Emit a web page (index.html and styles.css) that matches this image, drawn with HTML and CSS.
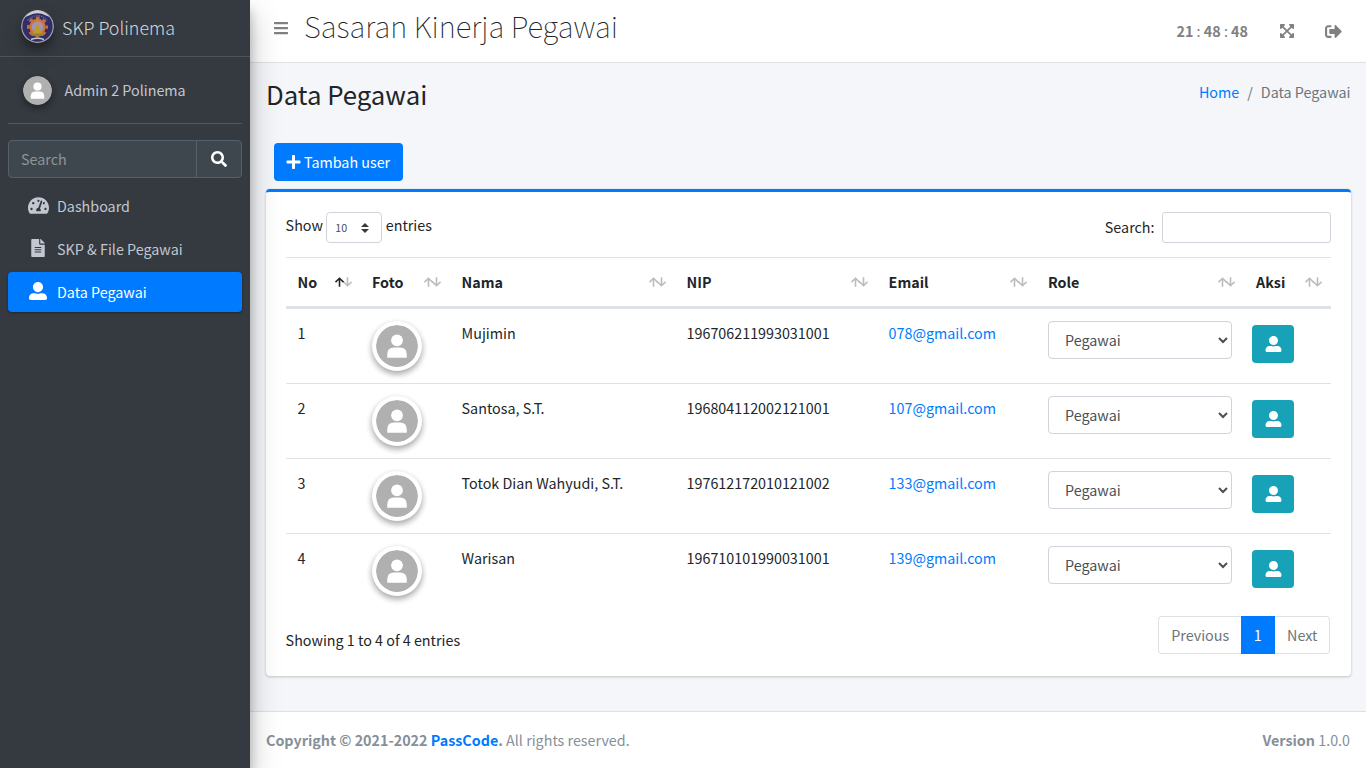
FILE: index.html
```html
<!DOCTYPE html>
<html lang="id">
<head>
<meta charset="utf-8">
<title>Sasaran Kinerja Pegawai</title>
<link rel="stylesheet" href="styles.css">
</head>
<body>
<svg class="defs" width="0" height="0">
  <symbol id="bars" viewBox="0 0 448 512"><path d="M16 132h416c8.800 0 16-7.200 16-16V76c0-8.800-7.200-16-16-16H16C7.200 60 0 67.200 0 76v40c0 8.800 7.200 16 16 16zm0 160h416c8.800 0 16-7.200 16-16v-40c0-8.800-7.200-16-16-16H16c-8.800 0-16 7.200-16 16v40c0 8.800 7.200 16 16 16zm0 160h416c8.800 0 16-7.200 16-16v-40c0-8.800-7.200-16-16-16H16c-8.800 0-16 7.200-16 16v40c0 8.800 7.200 16 16 16z"/></symbol>
  <symbol id="search" viewBox="0 0 512 512"><path d="M505 442.700L405.300 343c-4.500-4.500-10.600-7-17-7H372c27.600-35.300 44-79.700 44-128C416 93.100 322.900 0 208 0S0 93.100 0 208s93.100 208 208 208c48.300 0 92.700-16.400 128-44v16.300c0 6.400 2.500 12.500 7 17l99.700 99.700c9.400 9.400 24.600 9.400 33.900 0l28.300-28.300c9.400-9.400 9.400-24.600.1-34zM208 336c-70.700 0-128-57.200-128-128 0-70.700 57.200-128 128-128 70.700 0 128 57.200 128 128 0 70.700-57.200 128-128 128z"/></symbol>
  <symbol id="gauge" viewBox="0 0 576 512"><path d="M288 32C128.940 32 0 160.940 0 320c0 52.800 14.250 102.260 39.060 144.800 5.610 9.620 16.300 15.200 27.440 15.200h443c11.140 0 21.830-5.580 27.440-15.200C561.750 422.260 576 372.800 576 320c0-159.060-128.940-288-288-288zm0 64c14.710 0 26.580 10.130 30.320 23.650-1.110 2.260-2.640 4.230-3.450 6.670l-9.220 27.670c-5.130 3.490-10.970 6.010-17.640 6.010-17.670 0-32-14.330-32-32S270.330 96 288 96zM96 384c-17.670 0-32-14.330-32-32s14.330-32 32-32 32 14.330 32 32-14.330 32-32 32zm48-160c-17.670 0-32-14.330-32-32s14.330-32 32-32 32 14.330 32 32-14.330 32-32 32zm246.770-72.410l-61.330 184C343.130 347.330 352 364.540 352 384c0 11.720-3.380 22.550-8.880 32H232.880c-5.500-9.450-8.880-20.280-8.880-32 0-33.940 26.500-61.430 59.900-63.590l61.340-184.010c4.170-12.560 17.730-19.450 30.360-15.170 12.570 4.190 19.350 17.790 15.170 30.360zm14.660 57.200l15.520-46.550c3.470-1.290 7.130-2.230 11.050-2.230 17.670 0 32 14.330 32 32s-14.330 32-32 32c-11.380-.01-20.890-6.280-26.570-15.220zM480 384c-17.670 0-32-14.330-32-32s14.330-32 32-32 32 14.330 32 32-14.330 32-32 32z"/></symbol>
  <symbol id="file" viewBox="0 0 384 512"><path d="M224 136V0H24C10.700 0 0 10.700 0 24v464c0 13.300 10.700 24 24 24h336c13.300 0 24-10.700 24-24V160H248c-13.200 0-24-10.800-24-24zm64 236c0 6.600-5.400 12-12 12H108c-6.600 0-12-5.400-12-12v-8c0-6.600 5.400-12 12-12h168c6.600 0 12 5.400 12 12v8zm0-64c0 6.600-5.400 12-12 12H108c-6.600 0-12-5.400-12-12v-8c0-6.600 5.400-12 12-12h168c6.600 0 12 5.400 12 12v8zm0-72v8c0 6.600-5.400 12-12 12H108c-6.600 0-12-5.400-12-12v-8c0-6.600 5.400-12 12-12h168c6.600 0 12 5.400 12 12zm96-114.100v6.100H256V0h6.100c6.400 0 12.500 2.500 17 7l97.900 98c4.500 4.500 7 10.600 7 16.900z"/></symbol>
  <symbol id="user" viewBox="0 0 512 512"><path d="M256 288c79.500 0 144-64.500 144-144S335.500 0 256 0 112 64.500 112 144s64.500 144 144 144zm128 32h-55.100c-22.200 10.200-46.900 16-72.900 16s-50.600-5.800-72.900-16H128C57.300 320 0 377.300 0 448v16c0 26.500 21.500 48 48 48h416c26.500 0 48-21.500 48-48v-16c0-70.700-57.300-128-128-128z"/></symbol>
  <symbol id="plus" viewBox="0 0 448 512"><path d="M416 208H272V64c0-17.670-14.330-32-32-32h-32c-17.670 0-32 14.330-32 32v144H32c-17.670 0-32 14.330-32 32v32c0 17.670 14.330 32 32 32h144v144c0 17.670 14.330 32 32 32h32c17.670 0 32-14.330 32-32V304h144c17.670 0 32-14.330 32-32v-32c0-17.670-14.330-32-32-32z"/></symbol>
  <symbol id="expand" viewBox="0 0 448 512"><path d="M448 344v112a23.940 23.940 0 0 1-24 24H312c-21.390 0-32.090-25.900-17-41l36.200-36.200L224 295.600 116.770 402.900 153 439c15.090 15.100 4.390 41-17 41H24a23.940 23.940 0 0 1-24-24V344c0-21.400 25.890-32.100 41-17l36.190 36.200L184.460 256 77.180 148.700 41 185c-15.100 15.100-41 4.400-41-17V56a23.940 23.940 0 0 1 24-24h112c21.390 0 32.090 25.900 17 41l-36.200 36.200L224 216.400l107.230-107.300L295 73c-15.090-15.100-4.390-41 17-41h112a23.940 23.940 0 0 1 24 24v112c0 21.400-25.890 32.100-41 17l-36.190-36.200L263.540 256l107.280 107.300L407 327.100c15.100-15.200 41-4.500 41 16.900z"/></symbol>
  <symbol id="signout" viewBox="0 0 512 512"><path d="M497 273L329 441c-15 15-41 4.500-41-17v-96H152c-13.300 0-24-10.700-24-24v-96c0-13.300 10.700-24 24-24h136V88c0-21.400 25.900-32 41-17l168 168c9.300 9.400 9.300 24.600 0 34zM192 436v-40c0-6.600-5.400-12-12-12H96c-17.700 0-32-14.300-32-32V160c0-17.700 14.300-32 32-32h84c6.600 0 12-5.400 12-12V76c0-6.600-5.400-12-12-12H96c-53 0-96 43-96 96v192c0 53 43 96 96 96h84c6.600 0 12-5.400 12-12z"/></symbol>
  <symbol id="avatar" viewBox="0 0 42 42"><circle cx="21" cy="21" r="21" fill="#b0b0b0"/><circle cx="21" cy="15.300" r="5.900" fill="#fff"/><path d="M11.200 32.800v-3.300q0-7 7-7h5.600q7 0 7 7v3.300z" fill="#fff"/></symbol>
  <symbol id="up" viewBox="0 0 9 10"><path d="M4.500 9.700V1.400M.5 5.200l4-3.900 4 3.900"/></symbol>
  <symbol id="down" viewBox="0 0 9 10"><path d="M4.500.2v8.300M.5 4.800l4 3.900 4-3.900"/></symbol>
</svg>

<aside class="sidebar">
  <a class="brand">
    <svg class="logo" viewBox="0 0 33 33">
      <circle cx="16.500" cy="16.500" r="15.800" fill="#302d68" stroke="#a3a3aa" stroke-width="1.300"/>
      <path d="M4 7Q16.500-6.500 29 7L25 5.500Q16.500 1 8 5.500z" fill="#cfcfcf"/>
      <path d="M6.500 10.500Q16.500.5 26.500 10.500" fill="none" stroke="#6b6a92" stroke-width="1.300" stroke-dasharray="1.500 1"/>
      <circle cx="16.500" cy="17" r="9.200" fill="none" stroke="#c4703a" stroke-width="2.600" stroke-dasharray="3.800 3.425" stroke-dashoffset="1.900"/>
      <circle cx="16.500" cy="17" r="7" fill="#a294b4" stroke="#cf7233" stroke-width="2.400"/>
      <path d="M16.500 8.500l1.600 9.500 3.400 6h-10l3.400-6z" fill="#b99d2e"/>
      <path d="M11 23.500h11v2.500H11z" fill="#94803a"/>
      <path d="M10 29.500q6.500-2.500 13 0" fill="none" stroke="#c4c4c8" stroke-width="1.600"/>
    </svg>
    <span>SKP Polinema</span>
  </a>
  <div class="side-body">
    <div class="user-panel">
      <svg class="user-pic"><use href="#avatar"/></svg>
      <span>Admin 2 Polinema</span>
    </div>
    <div class="side-search">
      <input type="text" placeholder="Search">
      <button><svg><use href="#search"/></svg></button>
    </div>
    <nav class="menu">
      <a><svg class="i-gauge"><use href="#gauge"/></svg><span>Dashboard</span></a>
      <a><svg class="i-file"><use href="#file"/></svg><span>SKP &amp; File Pegawai</span></a>
      <a class="active"><svg class="i-user"><use href="#user"/></svg><span>Data Pegawai</span></a>
    </nav>
  </div>
</aside>

<div class="page">
  <header class="topbar">
    <svg class="i-bars"><use href="#bars"/></svg>
    <h1>Sasaran Kinerja Pegawai</h1>
    <div class="clock"><b>21</b> : <b>48</b> : <b>48</b></div>
    <svg class="i-expand"><use href="#expand"/></svg>
    <svg class="i-out"><use href="#signout"/></svg>
  </header>

  <main class="content">
    <div class="title-row">
      <h2>Data Pegawai</h2>
      <div class="crumbs"><a>Home</a><span class="slash">/</span><span>Data Pegawai</span></div>
    </div>
    <button class="btn-add"><svg><use href="#plus"/></svg><span>Tambah user</span></button>

    <section class="card">
      <div class="tools">
        <div class="length"><span>Show</span>
          <div class="len-select"><span>10</span><svg viewBox="0 0 8 10"><path d="M4 0L0 4h8zM4 10L0 6h8z"/></svg></div>
          <span>entries</span></div>
        <div class="filter"><span>Search:</span><input type="text"></div>
      </div>
      <table>
        <colgroup><col class="c1"><col class="c2"><col class="c3"><col class="c4"><col class="c5"><col class="c6"><col class="c7"></colgroup>
        <thead><tr>
          <th><div>No<span class="sort asc"><svg><use href="#up"/></svg><svg><use href="#down"/></svg></span></div></th>
          <th><div>Foto<span class="sort"><svg><use href="#up"/></svg><svg><use href="#down"/></svg></span></div></th>
          <th><div>Nama<span class="sort"><svg><use href="#up"/></svg><svg><use href="#down"/></svg></span></div></th>
          <th><div>NIP<span class="sort"><svg><use href="#up"/></svg><svg><use href="#down"/></svg></span></div></th>
          <th><div>Email<span class="sort"><svg><use href="#up"/></svg><svg><use href="#down"/></svg></span></div></th>
          <th><div>Role<span class="sort"><svg><use href="#up"/></svg><svg><use href="#down"/></svg></span></div></th>
          <th><div>Aksi<span class="sort"><svg><use href="#up"/></svg><svg><use href="#down"/></svg></span></div></th>
        </tr></thead>
        <tbody>
          <tr><td>1</td><td><svg class="photo"><use href="#avatar"/></svg></td><td>Mujimin</td><td>196706211993031001</td><td><a>078@gmail.com</a></td><td><select><option>Pegawai</option></select></td><td class="act"><button><svg><use href="#user"/></svg></button></td></tr>
          <tr><td>2</td><td><svg class="photo"><use href="#avatar"/></svg></td><td>Santosa, S.T.</td><td>196804112002121001</td><td><a>107@gmail.com</a></td><td><select><option>Pegawai</option></select></td><td class="act"><button><svg><use href="#user"/></svg></button></td></tr>
          <tr><td>3</td><td><svg class="photo"><use href="#avatar"/></svg></td><td>Totok Dian Wahyudi, S.T.</td><td>197612172010121002</td><td><a>133@gmail.com</a></td><td><select><option>Pegawai</option></select></td><td class="act"><button><svg><use href="#user"/></svg></button></td></tr>
          <tr><td>4</td><td><svg class="photo"><use href="#avatar"/></svg></td><td>Warisan</td><td>196710101990031001</td><td><a>139@gmail.com</a></td><td><select><option>Pegawai</option></select></td><td class="act"><button><svg><use href="#user"/></svg></button></td></tr>
        </tbody>
      </table>
      <div class="table-foot">
        <div class="info">Showing 1 to 4 of 4 entries</div>
        <div class="pager"><a class="prev">Previous</a><a class="current">1</a><a class="next">Next</a></div>
      </div>
    </section>
  </main>

  <footer class="footer">
    <div><b>Copyright © 2021-2022 <a>PassCode</a>.</b> All rights reserved.</div>
    <div><b>Version</b> 1.0.0</div>
  </footer>
</div>
</body>
</html>
```
FILE: styles.css
```css
* { box-sizing: border-box; }
body, input, select, button {
  font-family: "Noto Sans CJK JP", "Noto Sans CJK SC", "Noto Sans", sans-serif;
  font-size: 14.320px;
  line-height: 24px;
}
body {
  margin: 0;
  display: flex;
  height: 768px;
  overflow: hidden;
  background: #f4f6f9;
  color: #212529;
  white-space: nowrap;
}
.defs { display: none; }
svg { fill: currentColor; flex: none; }
a { color: #007bff; text-decoration: none; }
h1, h2 { margin: 0; }
b { font-weight: 700; }

/* Sidebar */
.sidebar {
  width: 250px;
  flex: none;
  z-index: 2;
  background: #343a40;
  color: #c2c7d0;
  box-shadow: 0 14px 28px rgba(0,0,0,.25), 0 10px 10px rgba(0,0,0,.22);
}
.brand {
  display: flex;
  align-items: center;
  height: 57px;
  padding: 0 0 3px 21px;
  border-bottom: 1px solid #4b545c;
  color: rgba(255,255,255,.8);
  font-size: 17.900px;
  font-weight: 300;
}
.logo {
  width: 33px;
  height: 33px;
  margin: 0 8px 1px 0;
  border-radius: 50%;
  box-shadow: 0 10px 20px rgba(0,0,0,.19), 0 6px 6px rgba(0,0,0,.23);
}
.side-body { padding: 0 8px; }
.user-panel {
  display: flex;
  align-items: center;
  height: 67px;
  padding-left: 15px;
  margin-bottom: 16px;
  border-bottom: 1px solid #4f5962;
}
.user-pic {
  width: 29px;
  height: 29px;
  margin-right: 12.500px;
  border-radius: 50%;
  box-shadow: 0 3px 6px rgba(0,0,0,.16), 0 3px 6px rgba(0,0,0,.23);
}
.side-search { display: flex; height: 38px; margin-bottom: 8px; }
.side-search input {
  width: 189px;
  padding: 0 12px;
  border: 1px solid #56606a;
  border-radius: 4px 0 0 4px;
  background: #3f474e;
  color: #fff;
}
.side-search input::placeholder { color: #8f9499; opacity: 1; }
.side-search button {
  width: 46px;
  margin-left: -1px;
  padding: 0;
  display: flex;
  align-items: center;
  justify-content: center;
  border: 1px solid #56606a;
  border-radius: 0 4px 4px 0;
  background: #3f474e;
  color: #fff;
}
.side-search svg { width: 16px; height: 16px; }
.menu { display: grid; gap: 3px; }
.menu a {
  display: grid;
  grid-template-columns: 26px 1fr;
  column-gap: 6px;
  align-items: center;
  height: 40px;
  padding-left: 17px;
  border-radius: 4px;
  color: #c2c7d0;
}
.menu svg { justify-self: center; margin-bottom: 2px; }
.menu .active {
  background: #007bff;
  color: #fff;
  box-shadow: 0 1px 3px rgba(0,0,0,.12), 0 1px 2px rgba(0,0,0,.24);
}
.i-gauge { width: 21px; height: 19px; }
.i-file { width: 14px; height: 18px; }
.i-user { width: 18px; height: 18px; }

/* Top bar */
.page { flex: 1; display: flex; flex-direction: column; min-width: 0; }
.topbar {
  display: flex;
  align-items: center;
  height: 63px;
  padding: 0 24px;
  background: #fff;
  border-bottom: 1px solid #dee2e6;
  color: #808080;
}
.i-bars { width: 14px; height: 16px; margin-bottom: 6px; }
.topbar h1 {
  margin: 0 auto 13px 16px;
  font-size: 29.400px;
  line-height: 38px;
  font-weight: 100;
  color: #212529;
}
.clock { margin-right: 32px; }
.i-expand { width: 14px; height: 16px; margin-right: 31px; }
.i-out { width: 17px; height: 17px; }

/* Content */
.content { flex: 1; padding: 12px 15px 0 16px; }
.title-row { display: flex; justify-content: space-between; height: 68px; }
.title-row h2 { font-size: 25.750px; line-height: 38px; font-weight: 400; }
.crumbs { display: flex; gap: 8px; padding: 5px .5px 0 0; color: #6c757d; }
.btn-add {
  display: flex;
  align-items: center;
  gap: 3px;
  width: 129px;
  height: 38px;
  margin: 0 0 8px 8px;
  padding: 0 12px;
  border: 0;
  border-radius: 4px;
  background: #007bff;
  color: #fff;
}
.btn-add svg { width: 15px; height: 16px; margin-bottom: 1px; }
.card {
  height: 487px;
  padding: 20px;
  border-top: 3px solid #007bff;
  border-radius: 4px;
  background: #fff;
  box-shadow: 0 0 1px rgba(0,0,0,.125), 0 1px 3px rgba(0,0,0,.2);
}
.tools { display: flex; justify-content: space-between; height: 45px; }
.length { display: flex; align-items: flex-start; gap: 3.400px; margin-left: -.4px; }
.length > span { margin-top: 1px; }
.len-select {
  display: flex;
  justify-content: space-between;
  align-items: center;
  width: 56px;
  height: 31px;
  padding: 1px 12px 0 8px;
  border: 1px solid #ced4da;
  border-radius: 4px;
  color: #495057;
  font-size: 10.700px;
}
.len-select svg { width: 8px; height: 10px; fill: #343a40; }
.filter { display: flex; gap: 7.500px; }
.filter span { margin-top: 3px; }
.filter input { width: 169px; height: 31px; border: 1px solid #ced4da; border-radius: 3px; }

table { width: 1045px; table-layout: fixed; border-collapse: separate; border-spacing: 0; }
.c1 { width: 74px; }
.c2 { width: 90px; }
.c3 { width: 225px; }
.c4 { width: 202px; }
.c5 { width: 159px; }
.c6 { width: 208px; }
.c7 { width: 87px; }
th {
  padding: 12px 9.500px 12px 11.600px;
  border-top: 1px solid #dee2e6;
  border-bottom: 2px solid #dee2e6;
  text-align: left;
  font-weight: 700;
}
th div { display: flex; justify-content: space-between; align-items: center; height: 24px; }
.sort { display: flex; }
.sort svg {
  width: 9px;
  height: 10px;
  margin-right: -.8px;
  fill: none;
  stroke: #212529;
  stroke-width: 1.600;
  opacity: .3;
}
.sort.asc { margin-right: -1px; }
.sort.asc svg:first-child { opacity: 1; }
td {
  height: 75px;
  padding: 12px 12px 12px 11.600px;
  border-top: 1px solid #dee2e6;
  vertical-align: top;
}
th:nth-child(2), td:nth-child(2),
th:nth-child(6), td:nth-child(6),
th:last-child { padding-left: 12px; }
.photo {
  display: block;
  width: 50px;
  height: 50px;
  padding: 4px;
  border-radius: 50%;
  background: #fff;
  box-shadow: 0 3px 6px rgba(0,0,0,.16), 0 3px 6px rgba(0,0,0,.23);
}
td select {
  display: block;
  width: 184px;
  height: 38px;
  padding: 0 0 2px 12px;
  border: 1px solid #ced4da;
  border-radius: 4px;
  background: #fff;
  color: #495057;
}
td.act { padding: 16px 8px 0; }
.act button {
  display: flex;
  align-items: center;
  justify-content: center;
  width: 42px;
  height: 38px;
  padding: 0;
  border: 0;
  border-radius: 4px;
  background: #17a2b8;
  color: #fff;
}
.act svg { width: 17px; height: 16px; }
.table-foot { display: flex; justify-content: space-between; padding: 8px 1px 0 0; }
.info { padding-top: 12px; margin-left: -.4px; }
.pager { display: flex; height: 38px; }
.pager a {
  padding: 6px 12px;
  border: 1px solid #dee2e6;
  color: #6c757d;
}
.pager .prev { border-radius: 4px 0 0 4px; border-right: 0; padding: 6px 11.600px 6px 12.400px; }
.pager .current { background: #007bff; border-color: #007bff; color: #fff; }
.pager .next { border-radius: 0 4px 4px 0; border-left: 0; padding: 6px 11.600px 6px 12.400px; }

/* Footer */
.footer {
  display: flex;
  justify-content: space-between;
  height: 57px;
  padding: 16px;
  border-top: 1px solid #dee2e6;
  background: #fff;
  color: #869099;
}
```
